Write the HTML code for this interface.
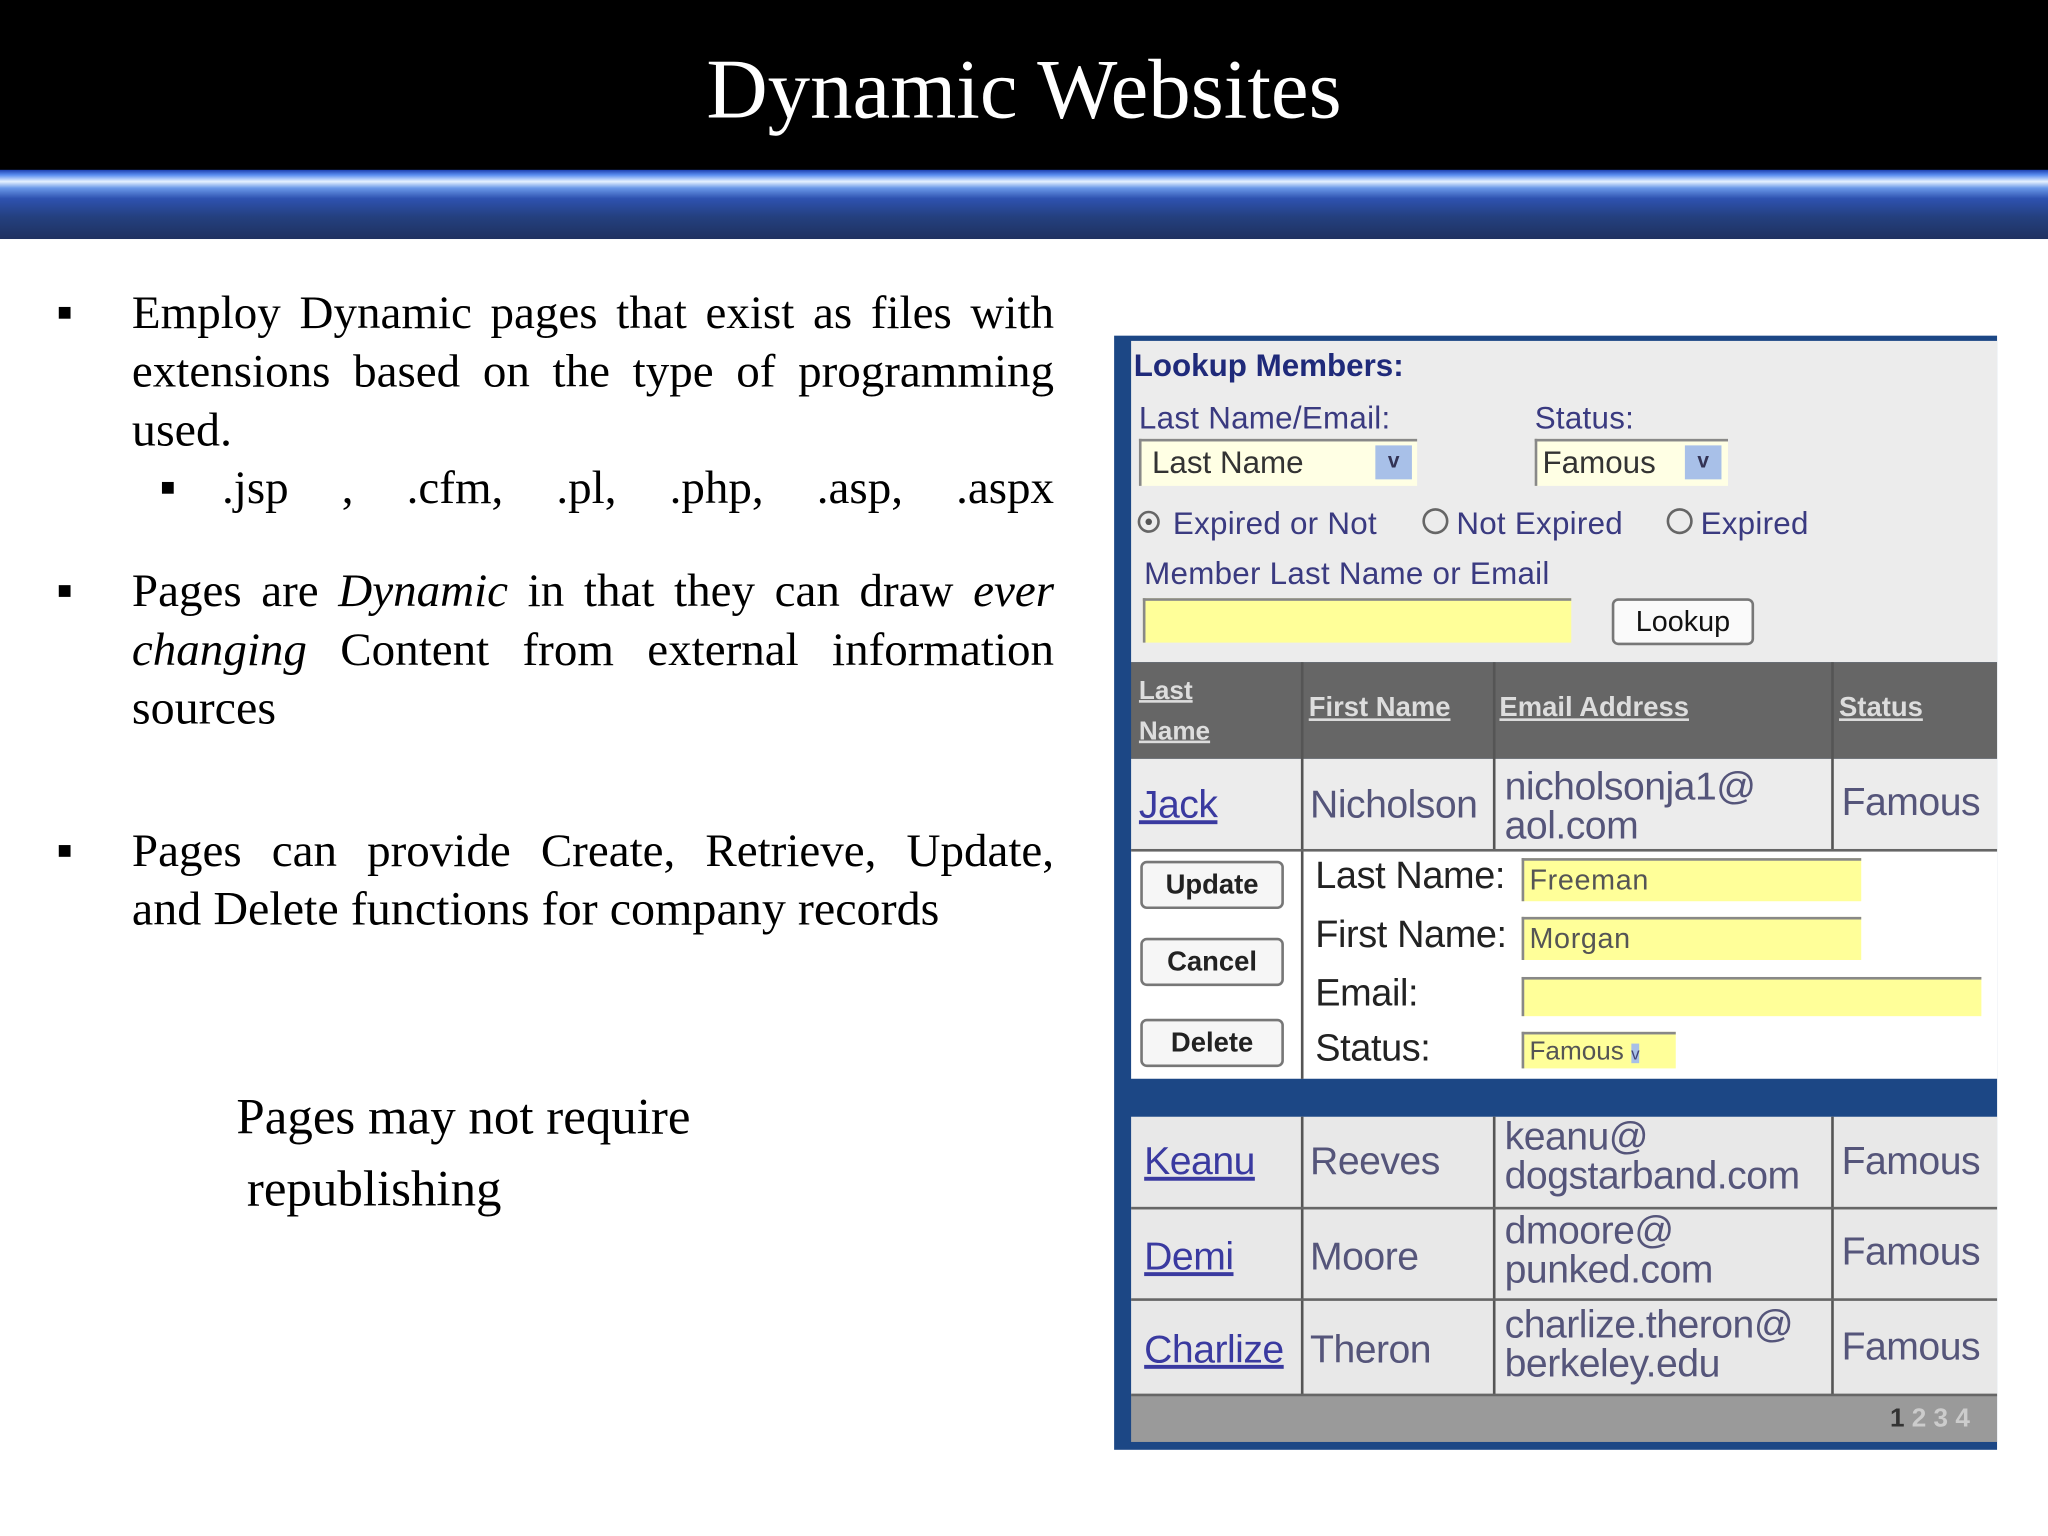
<!DOCTYPE html>
<html><head><meta charset="utf-8"><style>
html,body{margin:0;padding:0;width:2048px;height:1536px;overflow:hidden;background:#fff}
#w{position:absolute;left:0;top:0;width:1568px;height:1176px;transform:scale(1.30612);transform-origin:0 0}
.a{position:absolute;white-space:nowrap}
.s{font-family:"Liberation Serif",serif;font-size:36.8px;color:#000}
.p{font-family:"Liberation Sans",sans-serif}
.b{position:absolute;width:9px;height:9px;background:#000}
.j{position:absolute;left:101px;width:706px;text-align:justify;text-align-last:justify;font-family:"Liberation Serif",serif;font-size:36px;white-space:nowrap}
.btn{position:absolute;left:873px;width:110px;height:37px;border:2px solid #777;border-radius:5px;background:#f6f6f6;box-sizing:border-box;font:bold 21px "Liberation Sans",sans-serif;color:#222;text-align:center;line-height:33px}
.in{position:absolute;background:#ffff99;border-top:2px solid #888;border-left:2px solid #888;box-sizing:border-box;font:22px "Liberation Sans",sans-serif;letter-spacing:0.5px;color:#555;line-height:30px;padding-left:4px}
.lbl{position:absolute;left:1007px;font:29px "Liberation Sans",sans-serif;color:#222;letter-spacing:-0.3px}
.c{position:absolute;font:30px "Liberation Sans",sans-serif;color:#55557a;letter-spacing:-0.4px;line-height:30px}
.lk{color:#3a3aa0;text-decoration:underline}
.vl{position:absolute;width:2px;background:#555}
.hl{position:absolute;left:866px;width:663px;height:2px;background:#666}
.f{font-size:24px;color:#3a3a80;letter-spacing:0.2px}
</style></head><body><div id="w">
<div class="a" style="left:0;top:0;width:1568px;height:131px;background:#000"></div>
<div class="a" style="left:0;top:130px;width:1568px;height:53px;background:linear-gradient(180deg,#1b3fb0 0,#5a8ef0 4px,#e6f2ff 9px,#6a98e8 14px,#2e52b0 22px,#24407f 36px,#1f3160 53px)"></div>
<div class="a s" style="left:0;width:1568px;text-align:center;top:33px;font-size:65px;color:#fff;line-height:72px">Dynamic Websites</div>

<div class="b" style="left:45px;top:235px"></div>
<div class="j" style="top:218px">Employ Dynamic pages that exist as files with</div>
<div class="j" style="top:263px">extensions based on the type of programming</div>
<div class="a s" style="left:101px;top:307px">used.</div>
<div class="b" style="left:124px;top:369px"></div>
<div class="j" style="left:170px;width:637px;top:352px">.jsp , .cfm, .pl, .php, .asp, .aspx</div>

<div class="b" style="left:45px;top:448px"></div>
<div class="j" style="top:431px">Pages are <i>Dynamic</i> in that they can draw <i>ever</i></div>
<div class="j" style="top:476px"><i>changing</i> Content from external information</div>
<div class="a s" style="left:101px;top:520px">sources</div>

<div class="b" style="left:45px;top:647px"></div>
<div class="j" style="top:630px">Pages can provide Create, Retrieve, Update,</div>
<div class="a s" style="left:101px;top:674px">and Delete functions for company records</div>

<div class="a s" style="left:181px;top:833px;font-size:39px">Pages may not require</div>
<div class="a s" style="left:189px;top:888px;font-size:39px">republishing</div>

<!-- panel -->
<div class="a" style="left:853px;top:257px;width:676px;height:853px;background:#1c4785"></div>
<div class="a" style="left:866px;top:261px;width:663px;height:246px;background:#ececec"></div>
<div class="a p" style="left:868px;top:267px;font-size:24px;font-weight:bold;color:#1f2a7a">Lookup Members:</div>
<div class="a p f" style="left:872px;top:307px">Last Name/Email:</div>
<div class="a p f" style="left:1175px;top:307px">Status:</div>
<div class="in" style="left:872px;top:336px;width:213px;height:36px;background:#ffffe4;color:#333;font-size:24px;letter-spacing:0;line-height:34px;padding-left:8px">Last Name</div>
<div class="a" style="left:1053px;top:341px;width:28px;height:26px;background:#a8c0e8;color:#335;font:bold 16px sans-serif;text-align:center;line-height:26px">v</div>
<div class="in" style="left:1175px;top:336px;width:148px;height:36px;background:#ffffe4;color:#333;font-size:24px;letter-spacing:0;line-height:34px">Famous</div>
<div class="a" style="left:1290px;top:341px;width:28px;height:26px;background:#a8c0e8;color:#335;font:bold 16px sans-serif;text-align:center;line-height:26px">v</div>
<div class="a" style="left:871px;top:391px;width:17px;height:17px;border:2px solid #666;border-radius:50%;box-sizing:border-box"></div>
<div class="a" style="left:877px;top:397px;width:5px;height:5px;background:#555;border-radius:50%"></div>
<div class="a p f" style="left:898px;top:388px">Expired or Not</div>
<div class="a" style="left:1089px;top:389px;width:20px;height:20px;border:2px solid #666;border-radius:50%;box-sizing:border-box"></div>
<div class="a p f" style="left:1115px;top:388px">Not Expired</div>
<div class="a" style="left:1276px;top:389px;width:20px;height:20px;border:2px solid #666;border-radius:50%;box-sizing:border-box"></div>
<div class="a p f" style="left:1302px;top:388px">Expired</div>
<div class="a p f" style="left:876px;top:426px">Member Last Name or Email</div>
<div class="in" style="left:875px;top:458px;width:328px;height:34px"></div>
<div class="a p" style="left:1234px;top:458px;width:109px;height:36px;border:2px solid #777;border-radius:5px;background:#fafafa;box-sizing:border-box;text-align:center;line-height:32px;font-size:22px;color:#111">Lookup</div>

<div class="a" style="left:866px;top:507px;width:663px;height:74px;background:#666"></div>
<div class="a p" style="left:872px;top:514px;font-size:20px;font-weight:bold;color:#ddd;text-decoration:underline;line-height:31px;white-space:normal">Last<br>Name</div>
<div class="a p" style="left:1002px;top:530px;font-size:21px;font-weight:bold;color:#ddd;text-decoration:underline">First Name</div>
<div class="a p" style="left:1148px;top:530px;font-size:21px;font-weight:bold;color:#ddd;text-decoration:underline">Email Address</div>
<div class="a p" style="left:1408px;top:530px;font-size:21px;font-weight:bold;color:#ddd;text-decoration:underline">Status</div>

<div class="a" style="left:866px;top:581px;width:663px;height:70px;background:#ececec"></div>
<div class="a" style="left:866px;top:651px;width:663px;height:175px;background:#fff"></div>
<div class="a" style="left:866px;top:826px;width:663px;height:29px;background:#1c4785"></div>
<div class="a" style="left:866px;top:855px;width:663px;height:213px;background:#e8e8e8"></div>
<div class="a" style="left:866px;top:1068px;width:663px;height:36px;background:#9a9a9a"></div>

<div class="vl" style="left:996px;top:507px;height:319px"></div>
<div class="vl" style="left:1143px;top:507px;height:144px"></div>
<div class="vl" style="left:1402px;top:507px;height:144px"></div>
<div class="vl" style="left:996px;top:855px;height:213px"></div>
<div class="vl" style="left:1143px;top:855px;height:213px"></div>
<div class="vl" style="left:1402px;top:855px;height:213px"></div>
<div class="hl" style="top:650px"></div>
<div class="hl" style="top:924px"></div>
<div class="hl" style="top:994px"></div>
<div class="hl" style="top:1067px"></div>

<div class="c lk" style="left:872px;top:602px">Jack</div>
<div class="c" style="left:1003px;top:602px">Nicholson</div>
<div class="c" style="left:1152px;top:588px">nicholsonja1@<br>aol.com</div>
<div class="c" style="left:1410px;top:600px">Famous</div>

<div class="btn" style="top:659px">Update</div>
<div class="btn" style="top:718px">Cancel</div>
<div class="btn" style="top:780px">Delete</div>
<div class="lbl" style="top:655px">Last Name:</div>
<div class="lbl" style="top:700px">First Name:</div>
<div class="lbl" style="top:745px">Email:</div>
<div class="lbl" style="top:787px">Status:</div>
<div class="in" style="left:1165px;top:657px;width:260px;height:33px">Freeman</div>
<div class="in" style="left:1165px;top:702px;width:260px;height:33px">Morgan</div>
<div class="in" style="left:1165px;top:748px;width:352px;height:30px"></div>
<div class="in" style="left:1165px;top:790px;width:118px;height:28px;font-size:20px;letter-spacing:0;line-height:26px">Famous <span style="background:#a8c0e8;color:#447;font-size:13px">v</span></div>

<div class="c lk" style="left:876px;top:875px">Keanu</div>
<div class="c" style="left:1003px;top:875px">Reeves</div>
<div class="c" style="left:1152px;top:856px">keanu@<br>dogstarband.com</div>
<div class="c" style="left:1410px;top:875px">Famous</div>
<div class="c lk" style="left:876px;top:948px">Demi</div>
<div class="c" style="left:1003px;top:948px">Moore</div>
<div class="c" style="left:1152px;top:928px">dmoore@<br>punked.com</div>
<div class="c" style="left:1410px;top:944px">Famous</div>
<div class="c lk" style="left:876px;top:1019px">Charlize</div>
<div class="c" style="left:1003px;top:1019px">Theron</div>
<div class="c" style="left:1152px;top:1000px">charlize.theron@<br>berkeley.edu</div>
<div class="c" style="left:1410px;top:1017px">Famous</div>
<div class="a p" style="left:1447px;top:1075px;font-size:20px;font-weight:bold;color:#333">1<span style="color:#ccc"> 2 3 4</span></div>
</div></body></html>
